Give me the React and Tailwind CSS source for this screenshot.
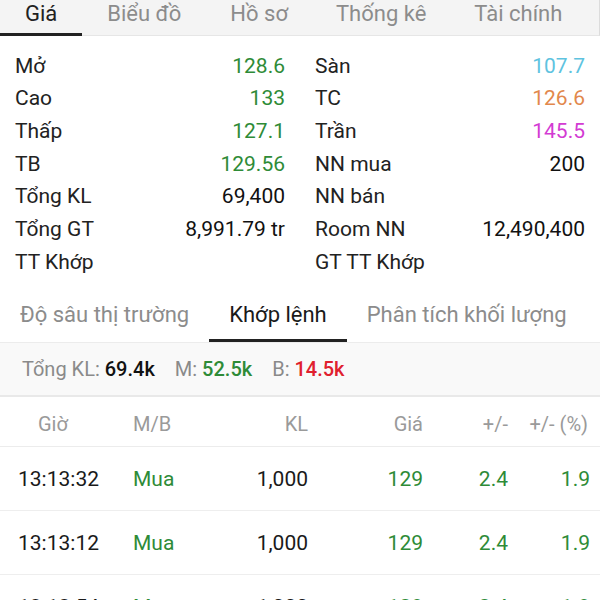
import React from "react";

const G = "text-[#2e8b37]";

function InfoRow({ label, value, color = "text-[#111]" }) {
  return (
    <div className="flex h-[32.67px] items-center justify-between">
      <span className="text-[#222]">{label}</span>
      <span className={color}>{value}</span>
    </div>
  );
}

export default function App() {
  const left = [
    ["Mở", "128.6", G],
    ["Cao", "133", G],
    ["Thấp", "127.1", G],
    ["TB", "129.56", G],
    ["Tổng KL", "69,400"],
    ["Tổng GT", "8,991.79 tr"],
    ["TT Khớp", ""],
  ];
  const right = [
    ["Sàn", "107.7", "text-[#5ec3df]"],
    ["TC", "126.6", "text-[#e2884c]"],
    ["Trần", "145.5", "text-[#d33bd3]"],
    ["NN mua", "200"],
    ["NN bán", ""],
    ["Room NN", "12,490,400"],
    ["GT TT Khớp", ""],
  ];
  const rows = [
    ["13:13:32", "Mua", "1,000", "129", "2.4", "1.9"],
    ["13:13:12", "Mua", "1,000", "129", "2.4", "1.9"],
    ["13:12:54", "Mua", "1,000", "129", "2.4", "1.9"],
  ];
  return (
    <div
      className="w-[600px] h-[600px] overflow-hidden bg-white"
      style={{ fontFamily: "Roboto, 'Noto Sans', sans-serif" }}
    >
      {/* Top tabs */}
      <div className="flex h-[36px] items-stretch bg-[#f4f4f4] border-b border-[#e6e6e6] border-r border-r-[#dcdcdc] text-[22px] leading-none">
        <div className="relative flex items-center pb-[8px] px-[25px] text-[#222]">
          Giá
          <div className="absolute left-0 right-0 bottom-[-1px] h-[3px] bg-[#222]" />
        </div>
        <div className="flex items-center pb-[8px] px-[25px] text-[#8c8c8c]">Biểu đồ</div>
        <div className="flex items-center pb-[8px] px-[24px] text-[#8c8c8c]">Hồ sơ</div>
        <div className="flex items-center pb-[8px] px-[24px] text-[#8c8c8c]">Thống kê</div>
        <div className="flex items-center pb-[8px] px-[24px] text-[#8c8c8c]">Tài chính</div>
      </div>

      {/* Info grid */}
      <div className="grid grid-cols-2 pt-[14px] pb-[9px] text-[21px] leading-none">
        <div className="px-[15px]">
          {left.map(([l, v, c]) => (
            <InfoRow key={l} label={l} value={v} color={c} />
          ))}
        </div>
        <div className="px-[15px]">
          {right.map(([l, v, c]) => (
            <InfoRow key={l} label={l} value={v} color={c} />
          ))}
        </div>
      </div>

      {/* Second tabs */}
      <div className="flex h-[55px] items-stretch border-b border-[#ececec] text-[22px] leading-none">
        <div className="flex items-center px-[20px] text-[#8c8c8c]">Độ sâu thị trường</div>
        <div className="relative flex items-center px-[20px] text-[#1a1a1a]">
          Khớp lệnh
          <div className="absolute left-0 right-0 bottom-0 h-[3px] bg-[#222]" />
        </div>
        <div className="flex items-center px-[20px] text-[#8c8c8c]">Phân tích khối lượng</div>
      </div>

      {/* Summary */}
      <div className="flex h-[54px] items-center gap-[20px] bg-[#f9f9f9] px-[22px] text-[20px] leading-none border-b-[2px] border-[#e9e9e9]">
        <span className="text-[#8a8a8a]">
          Tổng KL: <span className="font-medium text-[#111]">69.4k</span>
        </span>
        <span className="text-[#8a8a8a]">
          M: <span className="font-medium text-[#2e8b37]">52.5k</span>
        </span>
        <span className="text-[#8a8a8a]">
          B: <span className="font-medium text-[#e0202e]">14.5k</span>
        </span>
      </div>

      {/* Table header */}
      <div className="flex h-[50px] items-center pt-[6px] border-b border-[#ececec] text-[20px] leading-none text-[#9a9a9a]">
        <div className="w-[133px] pl-[38px]">Giờ</div>
        <div className="w-[100px]">M/B</div>
        <div className="w-[75px] text-right">KL</div>
        <div className="w-[115px] text-right">Giá</div>
        <div className="w-[85px] text-right">+/-</div>
        <div className="w-[80px] text-right">+/- (%)</div>
      </div>

      {rows.map((r, i) => (
        <div
          key={i}
          className="flex h-[64px] items-center pt-[2px] border-b border-[#eeeeee] text-[21px] leading-none"
        >
          <div className="w-[133px] pl-[18px] text-[#1a1a1a]">{r[0]}</div>
          <div className={`w-[100px] ${G}`}>{r[1]}</div>
          <div className="w-[75px] text-right text-[#1a1a1a]">{r[2]}</div>
          <div className={`w-[115px] text-right ${G}`}>{r[3]}</div>
          <div className={`w-[85px] text-right ${G}`}>{r[4]}</div>
          <div className={`w-[82px] text-right ${G}`}>{r[5]}</div>
        </div>
      ))}
    </div>
  );
}
